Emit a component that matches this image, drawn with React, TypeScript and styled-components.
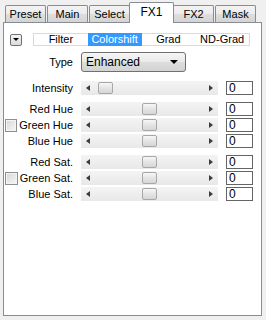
import React from "react";
import styled, { createGlobalStyle } from "styled-components";

const GlobalStyle = createGlobalStyle`
  html, body {
    margin: 0;
    padding: 0;
    background: #f0f0f0;
  }
  body {
    font-family: "Liberation Sans", Arial, sans-serif;
    font-size: 11px;
    color: #000;
  }
`;

const Window = styled.div`
  width: 266px;
  height: 320px;
  box-sizing: border-box;
  padding-left: 3px;
  background: #f0f0f0;
  overflow: hidden;
`;

const TabStrip = styled.div`
  display: flex;
  align-items: flex-end;
  gap: 1px;
  height: 22px;
  padding-left: 2px;
  position: relative;
  z-index: 1;
`;

const Tab = styled.div<{ $active?: boolean }>`
  box-sizing: border-box;
  width: ${(p) => (p.$active ? "45px" : "41px")};
  height: ${(p) => (p.$active ? "21px" : "17px")};
  margin: ${(p) => (p.$active ? "0 -2px -1px" : "0")};
  padding-bottom: ${(p) => (p.$active ? "2px" : "0")};
  border: 1px solid #898c95;
  border-bottom: ${(p) => (p.$active ? "none" : "0")};
  border-radius: 2px 2px 0 0;
  background: ${(p) =>
    p.$active ? "#fff" : "linear-gradient(#f3f3f3, #ebebeb 50%, #dedede 51%, #d4d4d4)"};
  display: flex;
  align-items: center;
  justify-content: center;
  font-size: ${(p) => (p.$active ? "12px" : "11px")};
  position: relative;
  z-index: ${(p) => (p.$active ? 2 : 0)};
`;

const Panel = styled.div`
  box-sizing: border-box;
  width: 259px;
  height: 294px;
  border: 1px solid #898c95;
  background: #fff;
  padding-top: 10px;
`;

const TopBar = styled.div`
  display: flex;
  align-items: center;
  gap: 11px;
  padding-left: 6px;
`;

const DropButton = styled.div`
  box-sizing: border-box;
  width: 12px;
  height: 12px;
  border: 1px solid #707070;
  border-radius: 2px;
  background: linear-gradient(#f4f4f4, #dcdcdc);
  display: flex;
  align-items: center;
  justify-content: center;
`;

const DownTriangle = styled.span<{ $w?: number }>`
  width: 0;
  height: 0;
  border-left: ${(p) => (p.$w ?? 7) / 2}px solid transparent;
  border-right: ${(p) => (p.$w ?? 7) / 2}px solid transparent;
  border-top: ${(p) => Math.ceil((p.$w ?? 7) / 2)}px solid #000;
`;

const ModeStrip = styled.div`
  box-sizing: border-box;
  width: 217px;
  height: 13px;
  border: 1px solid #dadada;
  background: #fff;
  display: flex;
`;

const Mode = styled.div<{ $selected?: boolean }>`
  flex: 1;
  margin: ${(p) => (p.$selected ? "-1px 0" : "0")};
  background: ${(p) => (p.$selected ? "#3399ff" : "transparent")};
  color: ${(p) => (p.$selected ? "#fff" : "#000")};
  display: flex;
  align-items: center;
  justify-content: center;
  line-height: 11px;
`;

const Form = styled.div`
  margin-left: 1px;
  margin-top: 6px;
  display: flex;
  flex-direction: column;
`;

const Row = styled.div<{ $h?: number }>`
  display: grid;
  grid-template-columns: 68px 137px 27px;
  column-gap: 8px;
  align-items: center;
  height: ${(p) => p.$h ?? 14}px;
`;

const Label = styled.div`
  display: flex;
  justify-content: flex-end;
  align-items: center;
  gap: 2px;
  white-space: nowrap;
  font-size: 11px;
`;

const Select = styled.div`
  box-sizing: border-box;
  width: 105px;
  height: 20px;
  border: 1px solid #707070;
  border-radius: 3px;
  background: linear-gradient(#f6f6f6, #e9e9e9 50%, #dddddd 51%, #d3d3d3);
  display: flex;
  align-items: center;
  justify-content: space-between;
  padding: 0 7px 0 4px;
  font-size: 12px;
`;

const Sliders = styled.div`
  margin-top: 9px;
  display: flex;
  flex-direction: column;
  gap: 7px;
`;

const Group = styled.div`
  display: flex;
  flex-direction: column;
  gap: 2px;
`;

const Track = styled.div`
  height: 14px;
  background: linear-gradient(#f4f4f4, #e8e8e8);
  display: flex;
  align-items: center;
`;

const ArrowCell = styled.div`
  width: 14px;
  height: 100%;
  display: flex;
  align-items: center;
  justify-content: center;
`;

const SideTriangle = styled.span<{ $dir: "left" | "right" }>`
  width: 0;
  height: 0;
  border-top: 3.5px solid transparent;
  border-bottom: 3.5px solid transparent;
  ${(p) =>
    p.$dir === "left"
      ? "border-right: 4px solid #3c3c3c;"
      : "border-left: 4px solid #3c3c3c;"}
`;

const ThumbZone = styled.div`
  flex: 1;
  height: 100%;
  position: relative;
`;

const Thumb = styled.div`
  position: absolute;
  top: 1px;
  box-sizing: border-box;
  width: 15px;
  height: 12px;
  border: 1px solid #a7a7a7;
  border-radius: 2px;
  background: linear-gradient(#f7f7f7, #e4e4e4 50%, #d6d6d6);
`;

const ValueBox = styled.div`
  box-sizing: border-box;
  width: 27px;
  height: 14px;
  border: 1px solid #646464;
  background: #fff;
  padding-left: 2px;
  font-size: 12px;
  line-height: 12px;
`;

const Check = styled.span`
  box-sizing: border-box;
  width: 13px;
  height: 13px;
  border: 1px solid #8f8f8f;
  background: linear-gradient(135deg, #d4d6da, #f8f8f8);
  box-shadow: inset 0 0 0 1px #f4f4f4;
`;

type SliderRow = { label: string; value: number; pos: number; check?: boolean };

const intensity: SliderRow[] = [{ label: "Intensity", value: 0, pos: 0.03 }];
const hues: SliderRow[] = [
  { label: "Red Hue", value: 0, pos: 0.5 },
  { label: "Green Hue", value: 0, pos: 0.5, check: true },
  { label: "Blue Hue", value: 0, pos: 0.5 },
];
const sats: SliderRow[] = [
  { label: "Red Sat.", value: 0, pos: 0.5 },
  { label: "Green Sat.", value: 0, pos: 0.5, check: true },
  { label: "Blue Sat.", value: 0, pos: 0.5 },
];

const Slider: React.FC<SliderRow> = ({ label, value, pos, check }) => (
  <Row>
    <Label>
      {check && <Check />}
      {label}
    </Label>
    <Track>
      <ArrowCell>
        <SideTriangle $dir="left" />
      </ArrowCell>
      <ThumbZone>
        <Thumb style={{ left: `calc((100% - 15px) * ${pos})` }} />
      </ThumbZone>
      <ArrowCell>
        <SideTriangle $dir="right" />
      </ArrowCell>
    </Track>
    <ValueBox>{value}</ValueBox>
  </Row>
);

const tabs = ["Preset", "Main", "Select", "FX1", "FX2", "Mask"];
const modes = ["Filter", "Colorshift", "Grad", "ND-Grad"];

export default function App() {
  return (
    <Window>
      <GlobalStyle />
      <TabStrip>
        {tabs.map((t) => (
          <Tab key={t} $active={t === "FX1"}>
            {t}
          </Tab>
        ))}
      </TabStrip>
      <Panel>
        <TopBar>
          <DropButton>
            <DownTriangle $w={6} />
          </DropButton>
          <ModeStrip>
            {modes.map((m) => (
              <Mode key={m} $selected={m === "Colorshift"}>
                {m}
              </Mode>
            ))}
          </ModeStrip>
        </TopBar>
        <Form>
          <Row $h={20}>
            <Label>Type</Label>
            <Select>
              <span>Enhanced</span>
              <DownTriangle $w={8} />
            </Select>
          </Row>
          <Sliders>
            {[intensity, hues, sats].map((g, i) => (
              <Group key={i}>
                {g.map((r) => (
                  <Slider key={r.label} {...r} />
                ))}
              </Group>
            ))}
          </Sliders>
        </Form>
      </Panel>
    </Window>
  );
}
